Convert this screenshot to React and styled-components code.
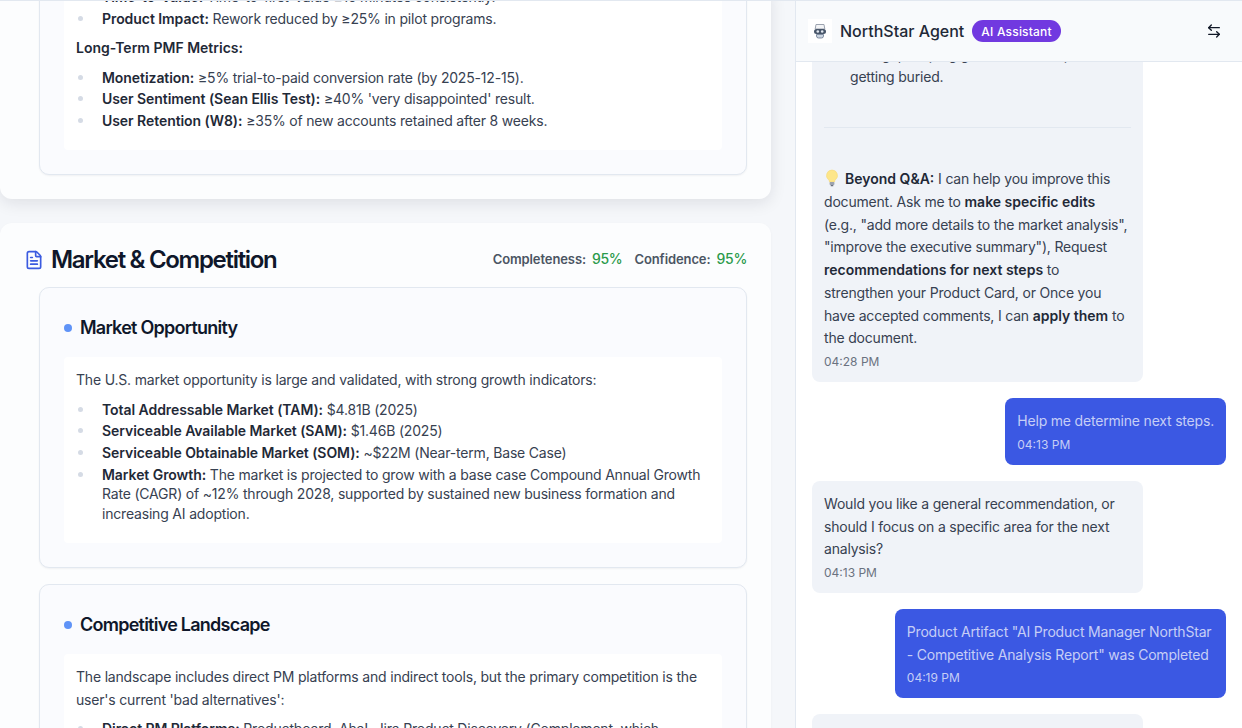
import React from 'react'
import styled, { createGlobalStyle } from 'styled-components'
import { FileText, ArrowLeftRight } from 'lucide-react'

const GlobalStyle = createGlobalStyle`
    html, body {
        margin: 0;
        padding: 0;
        background: #ffffff;
        font-family: Inter, "Liberation Sans", sans-serif;
    }
    * { box-sizing: border-box; }
`

const Page = styled.div`
    display: flex;
    width: 1242px;
    height: 728px;
    overflow: hidden;
    border-top: 1px solid #e2e8f0;
`
const DocColumn = styled.div`
    width: 795px;
    flex-shrink: 0;
    overflow: hidden;
    background: #f5f7fa;
    padding-right: 24px;
`
const DocScroll = styled.div`
    display: flex;
    flex-direction: column;
    gap: 24px;
    margin-top: -15px;
`
const Section = styled.section`
    background: #fcfdfe;
    border-radius: 12px;
    padding: ${p => (p.$clipped ? '0' : '17px')} 24px 24px 24px;
    box-shadow: ${p => (p.$clipped ? '0 4px 16px rgba(15, 23, 42, 0.1)' : '0 1px 3px rgba(15, 23, 42, 0.04)')};
`
const SectionHeader = styled.div`
    display: flex;
    align-items: center;
    justify-content: space-between;
    height: 40px;
    margin-bottom: 7px;
`
const SectionTitle = styled.h2`
    display: flex;
    align-items: center;
    gap: 7px;
    margin: 0;
    font-size: 24px;
    line-height: 32px;
    font-weight: 600;
    letter-spacing: -1.3px;
    color: #0f172a;
    svg { color: #3b5be0; flex-shrink: 0; }
`
const Scores = styled.div`
    display: flex;
    gap: 12px;
    margin-bottom: 3px;
    font-size: 13px;
    font-weight: 600;
    letter-spacing: -0.1px;
    color: #4b5563;
`
const ScoreValue = styled.span`
    color: #2b9a4b;
    margin-left: 6px;
    font-size: 14px;
    font-weight: 500;
    letter-spacing: -0.3px;
`
const Cards = styled.div`
    display: flex;
    flex-direction: column;
    gap: 16px;
    margin-left: 15px;
`
const Card = styled.div`
    background: #fafbfe;
    border: 1px solid #e2e8f0;
    border-radius: 10px;
    padding: ${p => (p.$clipped ? '0' : '24.5px')} 24px 24px 24px;
    box-shadow: 0 1px 2px rgba(15, 23, 42, 0.05);
`
const CardHeading = styled.h3`
    display: flex;
    align-items: center;
    gap: 8px;
    margin: 0 0 14.5px;
    font-size: 18px;
    line-height: 30px;
    font-weight: 600;
    letter-spacing: -0.75px;
    color: #0f172a;
    &::before {
        content: '';
        width: 8px;
        height: 8px;
        border-radius: 50%;
        background: #5f93f7;
    }
`
const CardBody = styled.div`
    background: #ffffff;
    border-radius: 4px;
    padding: ${p => (p.$clipped ? '0' : '12px')} 12px 18px;
    font-size: 14px;
    line-height: 22.4px;
    letter-spacing: -0.19px;
    color: #374151;
`
const Para = styled.p`
    margin: 0 0 8px;
`
const SubHead = styled.p`
    margin: 9px 0 8px;
    font-weight: 600;
    letter-spacing: 0;
    color: #1f2937;
`
const List = styled.ul`
    margin: 0;
    padding-left: 26px;
    list-style: none;
    line-height: 19.6px;
    strong { font-weight: 600; color: #1f2937; letter-spacing: -0.06px; }
`
const ListItem = styled.li`
    position: relative;
    margin-bottom: 2px;
    &::before {
        content: '';
        position: absolute;
        left: -24px;
        top: 7px;
        width: 5px;
        height: 5px;
        border-radius: 50%;
        background: #d5dbe5;
    }
`

const ChatColumn = styled.aside`
    flex: 1;
    min-width: 0;
    display: flex;
    flex-direction: column;
    border-left: 1px solid #e2e8f0;
    background: #ffffff;
`
const ChatHeader = styled.header`
    display: flex;
    align-items: center;
    justify-content: space-between;
    flex-shrink: 0;
    height: 61px;
    padding: 0 20px 0 12px;
    background: #f8fafc;
    border-bottom: 1px solid #e2e8f0;
`
const Brand = styled.div`
    display: flex;
    align-items: center;
`
const LogoBox = styled.div`
    display: flex;
    align-items: center;
    justify-content: center;
    width: 24px;
    height: 24px;
    margin-right: 8px;
    background: #ffffff;
`
const AgentName = styled.span`
    font-size: 16px;
    font-weight: 500;
    color: #1f2937;
    margin-right: 8px;
`
const Badge = styled.span`
    padding: 0 9px;
    height: 22px;
    display: flex;
    align-items: center;
    border-radius: 11px;
    background: #7139e0;
    color: #ffffff;
    font-size: 12px;
    font-weight: 500;
    letter-spacing: 0.2px;
`
const SwitchButton = styled.button`
    display: flex;
    padding: 0;
    border: 0;
    background: none;
    color: #111827;
`
const Messages = styled.div`
    flex: 1;
    min-height: 0;
    overflow: hidden;
    padding: 0 16px;
`
const MessageList = styled.div`
    display: flex;
    flex-direction: column;
    gap: 16px;
    margin-top: -30.5px;
`
const Bubble = styled.div`
    max-width: 80%;
    padding: 12px;
    border-radius: 8px;
    font-size: 14px;
    letter-spacing: -0.19px;
    line-height: ${p => (p.$user ? '22.4px' : '22.75px')};
    align-self: ${p => (p.$user ? 'flex-end' : 'flex-start')};
    background: ${p => (p.$user ? '#3b58e3' : '#f0f3f8')};
    color: ${p => (p.$user ? '#c6cef6' : '#374151')};
    strong { font-weight: 600; color: #1f2937; letter-spacing: 0; }
`
const Indented = styled.div`
    padding-left: 26px;
`
const Divider = styled.hr`
    margin: 38px 0 40px;
    border: 0;
    border-top: 1px solid #e2e8f0;
`
const Time = styled.div`
    margin-top: ${p => (p.$user ? '4px' : '4.4px')};
    font-size: 12px;
    line-height: 16px;
    letter-spacing: 0;
    color: ${p => (p.$user ? '#c6cef6' : '#6b7280')};
`
const BulbIcon = styled.svg`
    vertical-align: -3px;
    margin-right: 5px;
`

const RobotLogo = () => (
    <svg width="18" height="18" viewBox="0 0 18 18" fill="none">
        <path d="M5 2.5h8l.8 4.5H4.2z" fill="#f3f4f6" stroke="#9ca3af" strokeWidth="1" />
        <rect x="3" y="7" width="12" height="5" rx="2.5" fill="#475569" />
        <circle cx="6.8" cy="9.5" r="1.3" fill="#e2e8f0" />
        <circle cx="11.2" cy="9.5" r="1.3" fill="#e2e8f0" />
        <path d="M5.5 12.5h7v1.5a2 2 0 0 1-2 2h-3a2 2 0 0 1-2-2z" fill="#cbd5e1" stroke="#64748b" strokeWidth="0.8" />
    </svg>
)

const Bulb = () => (
    <BulbIcon width="16" height="18" viewBox="0 0 16 18">
        <path d="M8 1a5.5 5.5 0 0 0-3.4 9.8c.6.5.9 1.2.9 2.2h5c0-1 .3-1.7.9-2.2A5.5 5.5 0 0 0 8 1z" fill="#fde68a" stroke="#f5d978" strokeWidth="0.6" />
        <rect x="5.6" y="13" width="4.8" height="3" rx="0.8" fill="#9ca3af" />
        <rect x="6.6" y="16" width="2.8" height="1.3" rx="0.6" fill="#6b7280" />
    </BulbIcon>
)

const Score = ({ label, value }) => (
    <span>{label}:<ScoreValue>{value}</ScoreValue></span>
)

const App = () => {
    return (
        <Page>
            <GlobalStyle />
            <DocColumn>
                <DocScroll>
                    <Section $clipped>
                        <Cards>
                            <Card $clipped>
                                <CardBody $clipped>
                                    <List>
                                        <ListItem><strong>Time-to-Value:</strong> Time-to-first-Value ≥15 minutes consistently.</ListItem>
                                        <ListItem><strong>Product Impact:</strong> Rework reduced by ≥25% in pilot programs.</ListItem>
                                    </List>
                                    <SubHead>Long-Term PMF Metrics:</SubHead>
                                    <List>
                                        <ListItem><strong>Monetization:</strong> ≥5% trial-to-paid conversion rate (by 2025-12-15).</ListItem>
                                        <ListItem><strong>User Sentiment (Sean Ellis Test):</strong> ≥40% 'very disappointed' result.</ListItem>
                                        <ListItem><strong>User Retention (W8):</strong> ≥35% of new accounts retained after 8 weeks.</ListItem>
                                    </List>
                                </CardBody>
                            </Card>
                        </Cards>
                    </Section>
                    <Section>
                        <SectionHeader>
                            <SectionTitle><FileText size={20} />Market &amp; Competition</SectionTitle>
                            <Scores>
                                <Score label="Completeness" value="95%" />
                                <Score label="Confidence" value="95%" />
                            </Scores>
                        </SectionHeader>
                        <Cards>
                            <Card>
                                <CardHeading>Market Opportunity</CardHeading>
                                <CardBody>
                                    <Para>The U.S. market opportunity is large and validated, with strong growth indicators:</Para>
                                    <List>
                                        <ListItem><strong>Total Addressable Market (TAM):</strong> $4.81B (2025)</ListItem>
                                        <ListItem><strong>Serviceable Available Market (SAM):</strong> $1.46B (2025)</ListItem>
                                        <ListItem><strong>Serviceable Obtainable Market (SOM):</strong> ~$22M (Near-term, Base Case)</ListItem>
                                        <ListItem><strong>Market Growth:</strong> The market is projected to grow with a base case Compound Annual Growth Rate (CAGR) of ~12% through 2028, supported by sustained new business formation and increasing AI adoption.</ListItem>
                                    </List>
                                </CardBody>
                            </Card>
                            <Card>
                                <CardHeading>Competitive Landscape</CardHeading>
                                <CardBody>
                                    <Para>The landscape includes direct PM platforms and indirect tools, but the primary competition is the user's current 'bad alternatives':</Para>
                                    <List>
                                        <ListItem><strong>Direct PM Platforms:</strong> Productboard, Aha!, Jira Product Discovery (Complement, which</ListItem>
                                    </List>
                                </CardBody>
                            </Card>
                        </Cards>
                    </Section>
                </DocScroll>
            </DocColumn>
            <ChatColumn>
                <ChatHeader>
                    <Brand>
                        <LogoBox><RobotLogo /></LogoBox>
                        <AgentName>NorthStar Agent</AgentName>
                        <Badge>AI Assistant</Badge>
                    </Brand>
                    <SwitchButton aria-label="Switch panel"><ArrowLeftRight size={16} /></SwitchButton>
                </ChatHeader>
                <Messages>
                    <MessageList>
                        <Bubble>
                            <Indented>change, keeping good ideas and priorities<br />getting buried.</Indented>
                            <Divider />
                            <Bulb /><strong>Beyond Q&amp;A:</strong> I can help you improve this document. Ask me to <strong>make specific edits</strong> (e.g., "add more details to the market analysis", "improve the executive summary"), Request <strong>recommendations for next steps</strong> to strengthen your Product Card, or Once you have accepted comments, I can <strong>apply them</strong> to the document.
                            <Time>04:28 PM</Time>
                        </Bubble>
                        <Bubble $user>
                            Help me determine next steps.
                            <Time $user>04:13 PM</Time>
                        </Bubble>
                        <Bubble>
                            Would you like a general recommendation, or should I focus on a specific area for the next analysis?
                            <Time>04:13 PM</Time>
                        </Bubble>
                        <Bubble $user>
                            Product Artifact "AI Product Manager NorthStar - Competitive Analysis Report" was Completed
                            <Time $user>04:19 PM</Time>
                        </Bubble>
                        <Bubble>
                            Here is a recommendation for your next steps, based on the completed report.
                        </Bubble>
                    </MessageList>
                </Messages>
            </ChatColumn>
        </Page>
    )
}

export default App
